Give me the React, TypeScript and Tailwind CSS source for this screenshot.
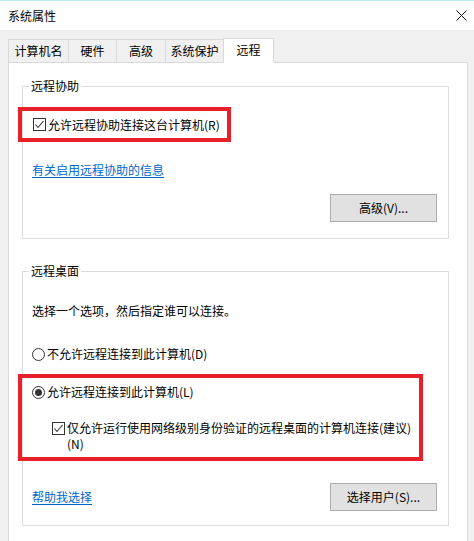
import { ReactNode } from "react";

const Check = () => (
  <span className="flex h-[13px] w-[13px] shrink-0 items-center justify-center border border-[#333333] bg-white">
    <svg width="11" height="11" viewBox="0 0 11 11" fill="none">
      <polyline points="1.5,5.5 4,8.5 9.5,2" stroke="#333333" strokeWidth="1.1" />
    </svg>
  </span>
);

const Radio = ({ on }: { on?: boolean }) => (
  <span className="flex h-[13px] w-[13px] shrink-0 items-center justify-center rounded-full border border-[#333333] bg-white">
    {on && <span className="h-[7px] w-[7px] rounded-full bg-[#333333]" />}
  </span>
);

const Btn = ({ children }: { children: ReactNode }) => (
  <button className="h-[28px] w-[107px] border border-[#adadad] bg-[#e1e1e1] leading-[26px] text-black">
    {children}
  </button>
);

const tabs = [
  { label: "计算机名", w: "w-[60px]" },
  { label: "硬件", w: "w-[48px]" },
  { label: "高级", w: "w-[49px]" },
  { label: "系统保护", w: "w-[58px]" },
];

export default function App() {
  return (
    <div className="flex h-[541px] w-[474px] flex-col overflow-hidden bg-[#f0f0f0] font-[family-name:'Noto_Sans_CJK_SC',sans-serif] text-[12px] leading-[16px] text-black">
      {/* title bar */}
      <div className="flex h-[30px] shrink-0 items-center justify-between border-t border-[#bfe9f7] bg-white pl-2 pr-[7px]">
        <span>系统属性</span>
        <svg width="11" height="11" viewBox="0 0 11 11">
          <path d="M0.5 0.5L10.5 10.5M10.5 0.5L0.5 10.5" stroke="#111111" strokeWidth="1" />
        </svg>
      </div>

      {/* tabs */}
      <div className="relative z-10 mt-[8px] -mb-px flex h-[25px] items-end pl-2">
        {tabs.map((t) => (
          <div
            key={t.label}
            className={`${t.w} flex h-[24px] items-center justify-center border-t border-b border-l border-[#d9d9d9] bg-[#f0f0f0]`}
          >
            {t.label}
          </div>
        ))}
        <div className="flex h-[25px] w-[51px] items-center justify-center border-x border-t border-b border-[#d9d9d9] border-b-white bg-white pb-[1px]">
          远程
        </div>
      </div>

      {/* panel */}
      <div className="ml-2 flex w-[460px] flex-1 flex-col border-x border-t border-[#d9d9d9] bg-white pl-[13px] pt-[15px]">
        <fieldset className="w-[427px] border border-[#dcdcdc] pb-[16px]">
          <legend className="ml-[6px] px-[2px] leading-[16px]">远程协助</legend>
          <div className="mt-[13px] -ml-[5px] flex h-[35px] w-[213px] items-center border-4 border-[#e8202a] pl-[11px]">
            <Check />
            <span className="ml-[2px] whitespace-nowrap">允许远程协助连接这台计算机(R)</span>
          </div>
          <div className="mt-[20px] pl-[9px]">
            <span className="text-[#0066cc] underline underline-offset-2">有关启用远程协助的信息</span>
          </div>
          <div className="mt-[16px] flex justify-end pr-[11px]">
            <Btn>高级(V)...</Btn>
          </div>
        </fieldset>

        <fieldset className="mt-[24px] w-[427px] border border-[#dcdcdc] pb-[14px]">
          <legend className="ml-[6px] px-[2px] leading-[16px]">远程桌面</legend>
          <div className="mt-[24px] pl-[9px]">选择一个选项，然后指定谁可以连接。</div>
          <div className="mt-[27px] flex items-center pl-[9px]">
            <Radio />
            <span className="ml-[2px]">不允许远程连接到此计算机(D)</span>
          </div>
          <div className="mt-[12px] -ml-[5px] h-[87px] w-[405px] border-4 border-[#e8202a] pl-[10px] pt-[6px]">
            <div className="flex items-center">
              <Radio on />
              <span className="ml-[2px]">允许远程连接到此计算机(L)</span>
            </div>
            <div className="mt-[20px] ml-[20px] flex items-start">
              <span className="mt-[2px]">
                <Check />
              </span>
              <span className="ml-[2px] whitespace-nowrap">
                仅允许运行使用网络级别身份验证的远程桌面的计算机连接(建议)
                <br />
                (N)
              </span>
            </div>
          </div>
          <div className="mt-[22px] flex items-center justify-between pl-[9px] pr-[11px]">
            <span className="text-[#0066cc] underline underline-offset-2">帮助我选择</span>
            <Btn>选择用户(S)...</Btn>
          </div>
        </fieldset>
      </div>
    </div>
  );
}
